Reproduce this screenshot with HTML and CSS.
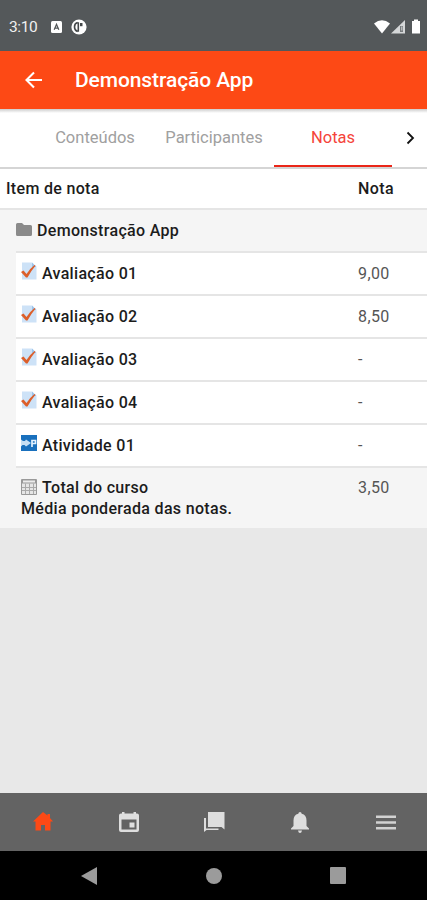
FILE: index.html
```html
<!DOCTYPE html>
<html lang="pt-BR">
<head>
  <meta charset="utf-8">
  <meta name="viewport" content="width=device-width, initial-scale=1">
  <title>Demonstração App</title>
  <link rel="stylesheet" href="styles.css">
</head>
<body>
  <svg width="0" height="0" class="defs">
    <symbol id="quiz" viewBox="0 0 16 18">
      <path fill="#cde2f7" d="M1 .5h10l4.500 4.500v12.500H1z"/>
      <path fill="#9cc4ea" d="M11 .5l4.500 4.500H11z"/>
      <path fill="#dc5f2b" d="M0 10l2.500-1.500 3 3.500Q9 6.500 13.500 3l1 .8Q10 9 6.500 15.500H5z"/>
    </symbol>
  </svg>

  <div class="status-bar">
    <span class="time">3:10</span>
    <svg class="badge-a" width="11" height="12" viewBox="0 0 11 12">
      <rect width="11" height="12" rx="1.5" fill="#fff"/>
      <path fill="none" stroke="#54585a" stroke-width="1.3" d="M3.2 8.7l2.3-5.4 2.3 5.4M4 7.2h3"/>
    </svg>
    <svg class="badge-p" width="16" height="16" viewBox="0 0 16 16">
      <circle cx="8" cy="8" r="7.6" fill="#fff"/>
      <path fill="none" stroke="#44484a" stroke-width="1.6" d="M7.3 3.2v9.500M6.5 3.6Q3.500 4.500 3.500 8t3 4.400"/>
      <path fill="#44484a" d="M9 4h2.500v3.200H9z"/>
    </svg>
    <svg class="signals" width="48" height="16" viewBox="0 0 48 16">
      <path fill="#fff" d="M0 4.5Q8-2 16 4.5L8 14.5z"/>
      <path fill="#d5d7d8" d="M17 14.5L31 1v13.5z"/>
      <path fill="#777b7d" d="M26 7h3v6h-3z"/>
      <path fill="#d5d7d8" d="M27.3 7.5h1v4h-1z"/>
      <path fill="#fff" d="M38 2h2V.5h4V2h2v12.500h-8z"/>
    </svg>
  </div>

  <div class="header">
    <svg width="18" height="18" viewBox="0 0 18 18">
      <path fill="none" stroke="#fff" stroke-width="2.1" d="M17 9H2M9 1.5L1.5 9 9 16.5"/>
    </svg>
    <h1>Demonstração App</h1>
  </div>

  <div class="tabs">
    <span class="tab tab-first">Conteúdos</span>
    <span class="tab tab-middle">Participantes</span>
    <span class="tab active">Notas</span>
    <svg width="9" height="14" viewBox="0 0 9 14">
      <path fill="none" stroke="#111" stroke-width="1.8" d="M1.5 1.5L7 7l-5.5 5.5"/>
    </svg>
  </div>

  <div class="grades">
    <div class="row row-head">
      <span class="item">Item de nota</span>
      <span class="grade">Nota</span>
    </div>
    <div class="row row-category">
      <svg width="16" height="13" viewBox="0 0 16 13">
        <path fill="#8a8a8a" d="M1.5 0H6l2 2h6.5Q16 2 16 3.500V11.500Q16 13 14.500 13h-13Q0 13 0 11.500v-10Q0 0 1.500 0z"/>
      </svg>
      <span class="item">Demonstração App</span>
    </div>
    <div class="row">
      <svg width="16" height="18"><use href="#quiz"/></svg>
      <span class="item">Avaliação 01</span>
      <span class="grade">9,00</span>
    </div>
    <div class="row">
      <svg width="16" height="18"><use href="#quiz"/></svg>
      <span class="item">Avaliação 02</span>
      <span class="grade">8,50</span>
    </div>
    <div class="row">
      <svg width="16" height="18"><use href="#quiz"/></svg>
      <span class="item">Avaliação 03</span>
      <span class="grade">-</span>
    </div>
    <div class="row">
      <svg width="16" height="18"><use href="#quiz"/></svg>
      <span class="item">Avaliação 04</span>
      <span class="grade">-</span>
    </div>
    <div class="row">
      <svg width="16" height="18" viewBox="0 0 16 18">
        <path fill="#1970bd" d="M0 1h16v16H0z"/>
        <path fill="#c6dff4" d="M0 5.500l2 1.500h2L5 5.500l5 3.500-5 3.500L3.500 11h-2L0 12.500z"/>
        <path fill="none" stroke="#e4f2ff" stroke-width="1.700" d="M11 13V6.500h3.500v3H11"/>
      </svg>
      <span class="item">Atividade 01</span>
      <span class="grade">-</span>
    </div>
    <div class="row row-total">
      <svg width="16" height="18" viewBox="0 0 16 18">
        <path fill="#e6e6e6" stroke="#999" d="M.5 1.500h15v15H.5z"/>
        <path fill="#999" d="M1 2h14v3.500H1z"/>
        <path fill="#ececec" d="M2 2.500h12v2H2z"/>
        <path stroke="#aaa" d="M1 9.500h14M1 12.500h14M4.500 5.500V16M8.500 5.500V16M12.500 5.500V16"/>
      </svg>
      <span class="item">Total do curso</span>
      <span class="grade">3,50</span>
      <span class="note">Média ponderada das notas.</span>
    </div>
  </div>

  <div class="bottom-nav">
    <a><svg width="20" height="20" viewBox="0 0 20 20">
      <path fill="#fd4915" d="M10 0l4.500 3.500V2H17v4l3 3.500h-2.500V18.500H12V13H8v5.500H2.500V9.500H0z"/>
    </svg></a>
    <a><svg width="20" height="20" viewBox="0 0 20 20">
      <path fill="#dedede" fill-rule="evenodd" d="M3 0h2.500v1.500h9V0H17v1.500h1q2 0 2 2V18q0 2-2 2H2q-2 0-2-2V3.500q0-2 2-2h1zM2.500 7.500v10h15v-10z"/>
      <path fill="#dedede" d="M10.500 10.500h5v5h-5z"/>
    </svg></a>
    <a><svg width="21" height="20" viewBox="0 0 21 20">
      <path fill="#dedede" d="M4 0h16.500v17.500l-3-2.500H4zM0 6h2v10.500h12.500V18H2.500L0 20z"/>
    </svg></a>
    <a><svg width="18" height="21" viewBox="0 0 18 21">
      <path fill="#dedede" d="M9 0q1.500 0 1.700 1.800Q15.500 3 15.500 8.500v5.500L18 16.500v1H0v-1L2.500 14V8.500Q2.500 3 7.300 1.800 7.500 0 9 0zM7 18.500h4Q10.500 21 9 21t-2-2.500z"/>
    </svg></a>
    <a><svg width="20" height="15" viewBox="0 0 20 15">
      <path fill="#d2d2d2" d="M0 .5h20v2.500H0zM0 6.200h20v2.500H0zM0 11.900h20v2.500H0z"/>
    </svg></a>
  </div>

  <div class="system-nav">
    <svg width="16" height="18" viewBox="0 0 16 18"><path fill="#9b9b9b" d="M0 9L16 0v18z"/></svg>
    <svg width="16" height="16" viewBox="0 0 16 16"><circle cx="8" cy="8" r="8" fill="#9b9b9b"/></svg>
    <svg width="16" height="17" viewBox="0 0 16 17"><rect width="16" height="17" rx="1" fill="#9b9b9b"/></svg>
  </div>
</body>
</html>
```

FILE: styles.css
```css
* {
  box-sizing: border-box;
}

body {
  margin: 0;
  height: 900px;
  display: flex;
  flex-direction: column;
  background-color: #e8e8e8;
  font-family: Roboto, sans-serif;
  overflow: hidden;
}

svg {
  display: block;
  flex: none;
}

.defs {
  position: absolute;
}

.status-bar {
  height: 51px;
  display: flex;
  align-items: center;
  padding: 2px 5px 0 9px;
  background-color: #54585a;
  color: #f0f0f0;
}

.time {
  width: 42px;
  font-size: 15.5px;
  letter-spacing: -0.4px;
}

.badge-p {
  margin-left: 9px;
}

.signals {
  margin-left: auto;
}

.header {
  height: 58px;
  display: flex;
  align-items: center;
  padding-left: 25px;
  background-color: #fd4915;
  color: #fff;
}

h1 {
  margin: 0 0 0 32px;
  font-size: 21px;
  font-weight: 500;
  letter-spacing: -0.1px;
}

.tabs {
  height: 60px;
  display: flex;
  align-items: center;
  padding-left: 36px;
  background-color: #fff;
  background-image: linear-gradient(#ccc, #fff 4px);
  border-bottom: 2px solid #d5d5d5;
  color: #a0a0a0;
  font-size: 16.5px;
}

.tab {
  width: 118px;
  height: 58px;
  line-height: 57px;
  text-align: center;
  white-space: nowrap;
}

.tab-middle {
  padding-left: 2px;
}

.tab.active {
  margin-left: 2px;
  color: #f5443a;
  border-bottom: 2px solid #ea2618;
}

.tabs svg {
  margin-left: 14px;
}

.grades {
  background-color: #f5f5f5;
}

.row {
  height: 43px;
  margin-left: 16px;
  padding-left: 5px;
  display: flex;
  align-items: center;
  background-color: #fff;
  border-bottom: 2px solid #e5e5e5;
  font-size: 16px;
}

.row svg {
  margin: -5px 5px 0 0;
}

.item,
.note {
  color: #1c1c1c;
  font-weight: 500;
  letter-spacing: 0.32px;
}

.grade {
  width: 69px;
  margin-left: auto;
  color: #555;
  letter-spacing: 0.4px;
}

.row-head {
  height: 41px;
  margin-left: 0;
  padding-left: 6px;
}

.row-head .grade {
  color: #1c1c1c;
  font-weight: 500;
}

.row-category {
  padding-left: 0;
  background-color: #f5f5f5;
}

.row-category svg {
  margin-top: -2px;
}

.row-total {
  height: 60px;
  flex-wrap: wrap;
  align-content: center;
  background-color: #f5f5f5;
  border-bottom: none;
  line-height: 21px;
}

.row-total svg {
  margin-top: -1px;
}

.note {
  width: 100%;
}

.bottom-nav {
  height: 58px;
  margin-top: auto;
  margin-right: -2px;
  display: grid;
  grid-template-columns: repeat(5, 1fr);
  place-items: center;
  background-color: #636363;
}

.system-nav {
  height: 49px;
  display: flex;
  align-items: center;
  justify-content: space-between;
  padding: 0 81px;
  background-color: #000;
}
```
